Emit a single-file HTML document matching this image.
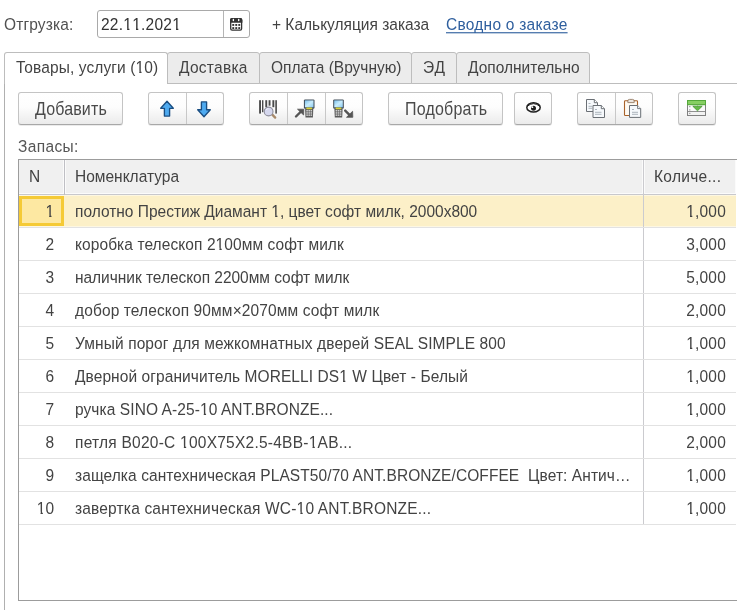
<!DOCTYPE html>
<html><head><meta charset="utf-8">
<style>
*{box-sizing:border-box;margin:0;padding:0}
html,body{width:737px;height:610px;overflow:hidden;background:#fff}
body{position:relative;font-family:"Liberation Sans",sans-serif;font-size:15.5px;color:#434343}
.a{position:absolute;white-space:nowrap;line-height:20px;margin-top:1px;transform:scaleY(1.12);transform-origin:0 15.4px;will-change:transform}
.btn{position:absolute;top:92px;height:33px;border:1px solid #c4c4c4;border-bottom-color:#a8a8a8;border-radius:3px;background:linear-gradient(#fff 0%,#fdfdfd 45%,#ebebeb 100%);box-shadow:0 1px 0 rgba(0,0,0,0.08)}
.sep{position:absolute;top:0;bottom:0;width:1px;background:#c8c8c8}
.tab{position:absolute;top:52px;height:32px;border:1px solid #bdbdbd;border-radius:3px 3px 0 0;background:#ececec}
.row{position:absolute;left:19px;width:718px;height:33px;border-bottom:1px solid #dcdcdc}
.n{position:absolute;right:0;width:45px;text-align:right}
.o{display:inline-block;clip-path:polygon(-2px -2px,12px -2px,12px 13.1px,6.1px 13.1px,6.1px 22px,3.8px 22px,3.8px 13.1px,-2px 13.1px)}
</style></head><body>

<!-- top line -->
<div class="a" style="left:4px;top:14px;letter-spacing:0.15px;color:#505050">Отгрузка:</div>
<div style="position:absolute;left:97px;top:10px;width:153px;height:28px;border:1px solid #a9a9a9;border-radius:3px;background:#fff"></div>
<div style="position:absolute;left:223px;top:11px;width:1px;height:26px;background:#b5b5b5"></div>
<div class="a" style="left:101px;top:14px;letter-spacing:0.25px;color:#333">22.<span class="o">1</span><span class="o">1</span>.202<span class="o">1</span></div>
<svg style="position:absolute;left:0;top:0" width="260" height="40" viewBox="0 0 260 40">
<rect x="230.7" y="18.6" width="10.9" height="11.5" rx="1.4" fill="#fff" stroke="#333" stroke-width="1.3"/>
<path d="M230 22.8 V20 Q230 18 232 18 H240.4 Q242.4 18 242.4 20 V22.8 Z" fill="#333"/>
<ellipse cx="233.4" cy="20" rx="0.75" ry="1.2" fill="#fff"/>
<ellipse cx="238.7" cy="20" rx="0.75" ry="1.2" fill="#fff"/>
<g fill="#333"><rect x="232.3" y="24" width="1.9" height="1.9"/><rect x="235.3" y="24" width="1.9" height="1.9"/><rect x="238.3" y="24" width="1.9" height="1.9"/>
<rect x="232.3" y="27.1" width="1.9" height="1.9"/><rect x="235.3" y="27.1" width="1.9" height="1.9"/><rect x="238.3" y="27.1" width="1.9" height="1.9"/></g>
</svg>
<div class="a" style="left:272px;top:14px;letter-spacing:0px">+ Калькуляция заказа</div>
<div class="a" style="left:446px;top:14px;color:#2f5f9e;text-decoration:underline;text-decoration-skip-ink:none;text-underline-offset:2px;letter-spacing:0.25px">Сводно о заказе</div>

<!-- tabs -->
<div style="position:absolute;left:167px;top:83px;width:570px;height:1px;background:#bdbdbd"></div>
<div style="position:absolute;left:4px;top:83px;width:1px;height:527px;background:#b0b0b0"></div>
<div class="tab" style="left:167px;width:93px"></div>
<div class="tab" style="left:259px;width:153px"></div>
<div class="tab" style="left:411px;width:46px"></div>
<div class="tab" style="left:456px;width:134px"></div>
<div class="tab" style="left:4px;width:164px;height:32px;background:#fff;border-bottom:none"></div>
<div class="a" style="left:16px;top:57px;letter-spacing:0.1px">Товары, услуги (<span class="o">1</span>0)</div>
<div class="a" style="left:179px;top:57px;letter-spacing:0.27px">Доставка</div>
<div class="a" style="left:271px;top:57px">Оплата (Вручную)</div>
<div class="a" style="left:423px;top:57px;letter-spacing:0.8px">ЭД</div>
<div class="a" style="left:468px;top:57px">Дополнительно</div>

<!-- toolbar -->
<div class="btn" style="left:18px;width:105px"></div>
<div class="a" style="left:35px;top:99px;font-size:16px;letter-spacing:0.15px;color:#4a4a4a">Добавить</div>

<div class="btn" style="left:148px;width:76px"><div class="sep" style="left:37px"></div></div>

<div class="btn" style="left:249px;width:114px"><div class="sep" style="left:37px"></div><div class="sep" style="left:75px"></div></div>

<div class="btn" style="left:388px;width:115px"></div>
<div class="a" style="left:405px;top:99px;font-size:16px;letter-spacing:0.2px;color:#4a4a4a">Подобрать</div>

<div class="btn" style="left:514px;width:38px"></div>

<div class="btn" style="left:577px;width:76px"><div class="sep" style="left:37px"></div></div>
<div class="btn" style="left:678px;width:38px"></div>

<svg style="position:absolute;left:0;top:0" width="737" height="140" viewBox="0 0 737 140">
<defs>
<linearGradient id="scr" x1="0" y1="0" x2="1" y2="1"><stop offset="0" stop-color="#7cc0ec"/><stop offset="0.5" stop-color="#c8ecfc"/><stop offset="1" stop-color="#8ccbf0"/></linearGradient>
</defs>
<!-- up arrow -->
<path d="M167 101.3 L173.3 108.3 L169.6 108.3 L169.6 116.1 L164.4 116.1 L164.4 108.3 L160.7 108.3 Z" fill="#4eaaf0" stroke="#1a4e82" stroke-width="1.35" stroke-linejoin="round"/>
<!-- down arrow -->
<path d="M204 116.7 L210.3 109.7 L206.6 109.7 L206.6 101.9 L201.4 101.9 L201.4 109.7 L197.7 109.7 Z" fill="#4eaaf0" stroke="#1a4e82" stroke-width="1.35" stroke-linejoin="round"/>
<!-- barcode -->
<g fill="#4a4a4a">
<rect x="259.1" y="100.2" width="1.9" height="13.4"/>
<rect x="262" y="100.2" width="1.4" height="12"/>
<rect x="265.3" y="100.2" width="1.9" height="7"/>
<rect x="268.6" y="100.2" width="1.9" height="5.5"/>
<rect x="272.4" y="100.2" width="1.9" height="7"/>
<rect x="275.3" y="100.2" width="1.6" height="13.4"/>
</g>
<line x1="272.3" y1="114.6" x2="275.2" y2="117.6" stroke="#a88a6a" stroke-width="2.3" stroke-linecap="round"/>
<circle cx="268.6" cy="111.5" r="4.4" fill="#d6d8ee" stroke="#8e8e9c" stroke-width="1.1"/>
<path d="M266 110 Q267 108.5 268.6 108.6" fill="none" stroke="#f4f4ff" stroke-width="0.9"/>
<!-- terminal 1 -->
<g transform="translate(303.3,99)">
<rect x="0.6" y="0.4" width="10.6" height="9.4" rx="1.2" fill="#3e4a56"/>
<rect x="1.6" y="1.4" width="8.6" height="6.9" fill="url(#scr)"/>
<path d="M1.8 9.4 H10 L9.6 18.4 H2.2 Z" fill="#5a5a5a"/>
<rect x="3" y="8.6" width="5.8" height="1.6" rx="0.6" fill="#d8d23a"/>
<g fill="#cfcfcf"><rect x="3" y="11" width="1.6" height="1.5"/><rect x="5.1" y="11" width="1.6" height="1.5"/><rect x="7.2" y="11" width="1.6" height="1.5"/>
<rect x="3" y="13.2" width="1.6" height="1.5"/><rect x="5.1" y="13.2" width="1.6" height="1.5"/><rect x="7.2" y="13.2" width="1.6" height="1.5"/>
<rect x="3" y="15.4" width="1.6" height="1.5"/><rect x="5.1" y="15.4" width="1.6" height="1.5"/><rect x="7.2" y="15.4" width="1.6" height="1.5"/></g>
</g>
<line x1="296" y1="116.5" x2="301" y2="111.5" stroke="#555" stroke-width="2.4" stroke-linecap="round"/>
<path d="M297.5 109.2 L303.8 109.2 L303.6 115 Z" fill="#555" stroke="#555" stroke-width="0.8" stroke-linejoin="round"/>
<!-- terminal 2 -->
<g transform="translate(332.6,99)">
<rect x="0.6" y="0.4" width="10.6" height="9.4" rx="1.2" fill="#3e4a56"/>
<rect x="1.6" y="1.4" width="8.6" height="6.9" fill="url(#scr)"/>
<path d="M1.8 9.4 H10 L9.6 18.4 H2.2 Z" fill="#5a5a5a"/>
<rect x="3" y="8.6" width="5.8" height="1.6" rx="0.6" fill="#d8d23a"/>
<g fill="#cfcfcf"><rect x="3" y="11" width="1.6" height="1.5"/><rect x="5.1" y="11" width="1.6" height="1.5"/><rect x="7.2" y="11" width="1.6" height="1.5"/>
<rect x="3" y="13.2" width="1.6" height="1.5"/><rect x="5.1" y="13.2" width="1.6" height="1.5"/><rect x="7.2" y="13.2" width="1.6" height="1.5"/>
<rect x="3" y="15.4" width="1.6" height="1.5"/><rect x="5.1" y="15.4" width="1.6" height="1.5"/><rect x="7.2" y="15.4" width="1.6" height="1.5"/></g>
</g>
<line x1="345.2" y1="110.6" x2="350.2" y2="115.6" stroke="#555" stroke-width="2.4" stroke-linecap="round"/>
<path d="M346.5 117.3 L352.8 117.3 L352.6 111.3 Z" fill="#555" stroke="#555" stroke-width="0.8" stroke-linejoin="round"/>
<!-- eye -->
<ellipse cx="533.5" cy="107.4" rx="6.7" ry="4.7" fill="#fff" stroke="#1e1e1e" stroke-width="1.5"/>
<path d="M527 106.5 Q533.5 100.8 540 106.5" fill="none" stroke="#1e1e1e" stroke-width="1"/>
<circle cx="533.5" cy="108.3" r="2.5" fill="#1e1e1e"/>
<circle cx="532.4" cy="107.2" r="0.9" fill="#fff"/>
<!-- copy -->
<g stroke="#6a6f75" stroke-width="1" fill="#f6f9fc" stroke-linejoin="round">
<path d="M586.5 99.5 H594.3 L597.5 102.7 V111.5 H586.5 Z"/>
<path d="M594.3 99.5 V102.7 H597.5" fill="#fff"/>
<path d="M593 105.5 H601.3 L604.5 108.7 V117.5 H593 Z"/>
<path d="M601.3 105.5 V108.7 H604.5" fill="#fff"/>
</g>
<g stroke="#a4acb6" stroke-width="0.9">
<line x1="588.5" y1="103.5" x2="590.5" y2="103.5"/><line x1="588.5" y1="106.3" x2="592.5" y2="106.3"/><line x1="588.5" y1="108.3" x2="592.5" y2="108.3"/>
<line x1="595" y1="109.5" x2="597" y2="109.5"/><line x1="595" y1="112.3" x2="601.5" y2="112.3"/><line x1="595" y1="114.3" x2="601.5" y2="114.3"/>
</g>
<!-- paste clipboard -->
<rect x="624.5" y="100.8" width="13" height="14.7" rx="0.8" fill="#fffaf2" stroke="#a8622a" stroke-width="1.1"/>
<path d="M627.8 102.6 V101 Q627.8 99.4 629.4 99.4 H632.6 Q634.2 99.4 634.2 101 V102.6 Z" fill="#ece6e0" stroke="#8a6e56" stroke-width="0.8"/>
<path d="M629.5 105.5 H637.6 L640.7 108.6 V117.4 H629.5 Z" fill="#f6f9fc" stroke="#6a6f75" stroke-width="1" stroke-linejoin="round"/>
<path d="M637.6 105.5 V108.6 H640.7" fill="#fff" stroke="#6a6f75" stroke-width="0.9" stroke-linejoin="round"/>
<g stroke="#a4acb6" stroke-width="0.9"><line x1="632" y1="109.5" x2="634" y2="109.5"/><line x1="632" y1="112.3" x2="638" y2="112.3"/><line x1="632" y1="114.3" x2="638" y2="114.3"/></g>
<!-- green table -->
<rect x="687.5" y="104.5" width="18" height="11" fill="#f2f2f2" stroke="#808080" stroke-width="1"/>
<rect x="688" y="105" width="17" height="6" fill="#fafafa"/>
<rect x="687.5" y="100.5" width="18" height="4.2" fill="#86cf62" stroke="#54a83a" stroke-width="1"/>
<line x1="688" y1="111.5" x2="705" y2="111.5" stroke="#909090" stroke-width="1"/>
<g fill="#a8a8a8"><rect x="689" y="106" width="1.5" height="1.2"/><rect x="689" y="109.3" width="1.5" height="1.2"/><rect x="689" y="112.8" width="1.5" height="1.2"/></g>
<line x1="697.5" y1="105" x2="697.5" y2="107" stroke="#a8e090" stroke-width="0.8"/>
<path d="M692.8 106.2 L702.2 106.2 L697.5 110.8 Z" fill="#66bb48" stroke="#44942e" stroke-width="0.8" stroke-linejoin="round"/>
</svg>
<div class="a" style="left:18px;top:136px;color:#555;letter-spacing:0.35px">Запасы:</div>

<!-- table -->
<div style="position:absolute;left:18px;top:159px;width:730px;height:442px;border:1px solid #9c9c9c;background:#fff"></div>
<div style="position:absolute;left:19px;top:160px;width:716px;height:33px;background:#f0f0f0"></div>
<div style="position:absolute;left:19px;top:193px;width:716px;height:1px;background:#fbfbfb"></div>
<div style="position:absolute;left:19px;top:194px;width:717px;height:1px;background:#c8c8cc"></div>
<div style="position:absolute;left:63px;top:160px;width:1px;height:34px;background:#fbfbfb"></div>
<div style="position:absolute;left:64px;top:160px;width:1px;height:35px;background:#bfbfc4"></div>
<div style="position:absolute;left:65px;top:160px;width:1px;height:34px;background:#fbfbfb"></div>
<div style="position:absolute;left:642px;top:160px;width:1px;height:34px;background:#fbfbfb"></div>
<div style="position:absolute;left:644px;top:160px;width:1px;height:34px;background:#fbfbfb"></div>
<div style="position:absolute;left:735px;top:160px;width:1px;height:34px;background:#fbfbfb"></div><div style="position:absolute;left:736px;top:160px;width:1px;height:35px;background:#fff"></div>
<div style="position:absolute;left:19px;top:195px;width:717px;height:32px;background:#fdf7e2"></div>
<div style="position:absolute;left:19px;top:196px;width:717px;height:30px;background:#fcf0c8"></div>
<div style="position:absolute;left:19px;top:196px;width:45px;height:30px;background:#fde8a2;border:3px solid #f5ca36"></div>
<div style="position:absolute;left:643px;top:160px;width:1px;height:365px;background:#cbcbcf"></div>
<div class="a" style="left:29px;top:166px">N</div>
<div class="a" style="left:75px;top:166px">Номенклатура</div>
<div class="a" style="left:654px;top:166px;letter-spacing:0.3px">Количе...</div>

<div class="a" style="left:19px;width:35px;text-align:right;top:201px"><span class="o">1</span></div>
<div class="a" style="left:75px;width:555px;overflow:hidden;text-overflow:ellipsis;top:201px">полотно Престиж Диамант <span class="o">1</span>, цвет софт милк, 2000x800</div>
<div class="a" style="left:644px;width:82px;text-align:right;letter-spacing:0.2px;top:201px"><span class="o">1</span>,000</div>
<div style="position:absolute;left:19px;top:227px;width:717px;height:1px;background:#e2e2e2"></div>
<div class="a" style="left:19px;width:35px;text-align:right;top:234px">2</div>
<div class="a" style="left:75px;width:555px;letter-spacing:0.084px;overflow:hidden;text-overflow:ellipsis;top:234px">коробка телескоп 2<span class="o">1</span>00мм софт милк</div>
<div class="a" style="left:644px;width:82px;text-align:right;letter-spacing:0.2px;top:234px">3,000</div>
<div style="position:absolute;left:19px;top:260px;width:717px;height:1px;background:#e2e2e2"></div>
<div class="a" style="left:19px;width:35px;text-align:right;top:267px">3</div>
<div class="a" style="left:75px;width:555px;letter-spacing:-0.036px;overflow:hidden;text-overflow:ellipsis;top:267px">наличник телескоп 2200мм софт милк</div>
<div class="a" style="left:644px;width:82px;text-align:right;letter-spacing:0.2px;top:267px">5,000</div>
<div style="position:absolute;left:19px;top:293px;width:717px;height:1px;background:#e2e2e2"></div>
<div class="a" style="left:19px;width:35px;text-align:right;top:300px">4</div>
<div class="a" style="left:75px;width:555px;letter-spacing:0.120px;overflow:hidden;text-overflow:ellipsis;top:300px">добор телескоп 90мм×2070мм софт милк</div>
<div class="a" style="left:644px;width:82px;text-align:right;letter-spacing:0.2px;top:300px">2,000</div>
<div style="position:absolute;left:19px;top:326px;width:717px;height:1px;background:#e2e2e2"></div>
<div class="a" style="left:19px;width:35px;text-align:right;top:333px">5</div>
<div class="a" style="left:75px;width:555px;letter-spacing:0.110px;overflow:hidden;text-overflow:ellipsis;top:333px">Умный порог для межкомнатных дверей SEAL SIMPLE 800</div>
<div class="a" style="left:644px;width:82px;text-align:right;letter-spacing:0.2px;top:333px"><span class="o">1</span>,000</div>
<div style="position:absolute;left:19px;top:359px;width:717px;height:1px;background:#e2e2e2"></div>
<div class="a" style="left:19px;width:35px;text-align:right;top:366px">6</div>
<div class="a" style="left:75px;width:555px;letter-spacing:0.080px;overflow:hidden;text-overflow:ellipsis;top:366px">Дверной ограничитель MORELLI DS<span class="o">1</span> W Цвет - Белый</div>
<div class="a" style="left:644px;width:82px;text-align:right;letter-spacing:0.2px;top:366px"><span class="o">1</span>,000</div>
<div style="position:absolute;left:19px;top:392px;width:717px;height:1px;background:#e2e2e2"></div>
<div class="a" style="left:19px;width:35px;text-align:right;top:399px">7</div>
<div class="a" style="left:75px;width:555px;letter-spacing:0.087px;overflow:hidden;text-overflow:ellipsis;top:399px">ручка SINO A-25-<span class="o">1</span>0 ANT.BRONZE...</div>
<div class="a" style="left:644px;width:82px;text-align:right;letter-spacing:0.2px;top:399px"><span class="o">1</span>,000</div>
<div style="position:absolute;left:19px;top:425px;width:717px;height:1px;background:#e2e2e2"></div>
<div class="a" style="left:19px;width:35px;text-align:right;top:432px">8</div>
<div class="a" style="left:75px;width:555px;letter-spacing:0.245px;overflow:hidden;text-overflow:ellipsis;top:432px">петля B020-C <span class="o">1</span>00X75X2.5-4BB-<span class="o">1</span>AB...</div>
<div class="a" style="left:644px;width:82px;text-align:right;letter-spacing:0.2px;top:432px">2,000</div>
<div style="position:absolute;left:19px;top:458px;width:717px;height:1px;background:#e2e2e2"></div>
<div class="a" style="left:19px;width:35px;text-align:right;top:465px">9</div>
<div class="a" style="left:75px;letter-spacing:0.08px;top:465px">защелка сантехническая PLAST50/70 ANT.BRONZE/COFFEE&nbsp; Цвет: Антич…</div>
<div class="a" style="left:644px;width:82px;text-align:right;letter-spacing:0.2px;top:465px"><span class="o">1</span>,000</div>
<div style="position:absolute;left:19px;top:491px;width:717px;height:1px;background:#e2e2e2"></div>
<div class="a" style="left:19px;width:35px;text-align:right;top:498px"><span class="o">1</span>0</div>
<div class="a" style="left:75px;width:555px;letter-spacing:0.176px;overflow:hidden;text-overflow:ellipsis;top:498px">завертка сантехническая WC-<span class="o">1</span>0 ANT.BRONZE...</div>
<div class="a" style="left:644px;width:82px;text-align:right;letter-spacing:0.2px;top:498px"><span class="o">1</span>,000</div>
<div style="position:absolute;left:19px;top:524px;width:717px;height:1px;background:#e2e2e2"></div>
</body></html>
